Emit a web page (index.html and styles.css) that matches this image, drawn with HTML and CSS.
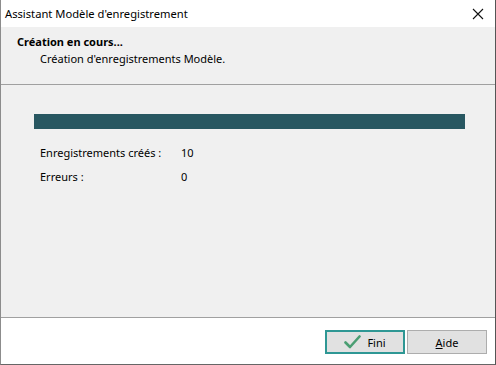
FILE: index.html
```html
<!DOCTYPE html>
<html lang="fr">
<head>
    <meta charset="UTF-8">
    <title>Assistant Modèle d'enregistrement</title>
    <link rel="stylesheet" href="styles.css">
</head>
<body>
    <div class="window">
        <div class="titlebar">
            <span class="title">Assistant Modèle d'enregistrement</span>
            <svg class="close" width="12" height="12" viewBox="0 0 12 12">
                <path d="M1 1 L11 11 M11 1 L1 11" stroke="#111" stroke-width="1.1" fill="none"/>
            </svg>
        </div>

        <div class="header">
            <div class="header-title">Création en cours...</div>
            <div class="header-sub">Création d'enregistrements Modèle.</div>
        </div>

        <div class="content">
            <div class="progress"></div>
            <div class="stats">
                <div class="stat-row">
                    <span class="stat-label">Enregistrements créés :</span>
                    <span class="stat-value">10</span>
                </div>
                <div class="stat-row">
                    <span class="stat-label">Erreurs :</span>
                    <span class="stat-value">0</span>
                </div>
            </div>
        </div>

        <div class="footer">
            <button class="btn btn-default">
                <svg width="17" height="14" viewBox="0 0 17 14">
                    <path d="M1.5 7.5 L6 12 L15.5 1.5" stroke="#4a9e72" stroke-width="2.6" fill="none" stroke-linecap="round" stroke-linejoin="round"/>
                </svg>
                <span>Fini</span>
            </button>
            <button class="btn"><span><u>A</u>ide</span></button>
        </div>
    </div>
</body>
</html>
```

FILE: styles.css
```css
body {
    margin: 0;
    padding: 0;
    font-family: 'Noto Sans', 'Liberation Sans', sans-serif;
    font-size: 11px;
    color: #000;
}

.window {
    width: 496px;
    height: 365px;
    box-sizing: border-box;
    display: flex;
    flex-direction: column;
    border-left: 1px solid #8c8c8c;
    border-right: 1px solid #555;
    border-bottom: 1px solid #666;
    background: #fff;
}

.titlebar {
    height: 27px;
    display: flex;
    align-items: center;
    justify-content: space-between;
    padding: 0 11px 0 4px;
    background: #fff;
}

.title {
    font-size: 11.2px;
    margin-top: -1px;
}

.close {
    margin-top: 1px;
}

.header {
    height: 58px;
    box-sizing: border-box;
    padding: 7px 0 0 16px;
    background: #f0f0f0;
    border-bottom: 1px solid #a0a0a0;
}

.header-title {
    font-weight: bold;
    line-height: 16px;
}

.header-sub {
    padding-left: 23px;
    line-height: 18px;
}

.content {
    flex: 1;
    background: #f0f0f0;
    padding: 29px 30px 0 33px;
}

.progress {
    height: 15px;
    background: #285761;
}

.stats {
    margin-top: 16px;
    padding-left: 6px;
}

.stat-row {
    display: flex;
    height: 24px;
    line-height: 16px;
}

.stat-label {
    width: 141px;
}

.footer {
    height: 47px;
    box-sizing: border-box;
    border-top: 1px solid #a0a0a0;
    background: #fff;
    display: flex;
    justify-content: flex-end;
    align-items: flex-start;
    gap: 2px;
    padding: 12px 8px 0 0;
}

.btn {
    width: 80px;
    height: 24px;
    box-sizing: border-box;
    border: 1px solid #adadad;
    background: #e1e1e1;
    font-family: inherit;
    font-size: 11px;
    color: #000;
    display: flex;
    align-items: center;
    justify-content: center;
    gap: 6px;
    padding: 0;
}

.btn-default {
    border: 2px solid #2e9794;
}
```
